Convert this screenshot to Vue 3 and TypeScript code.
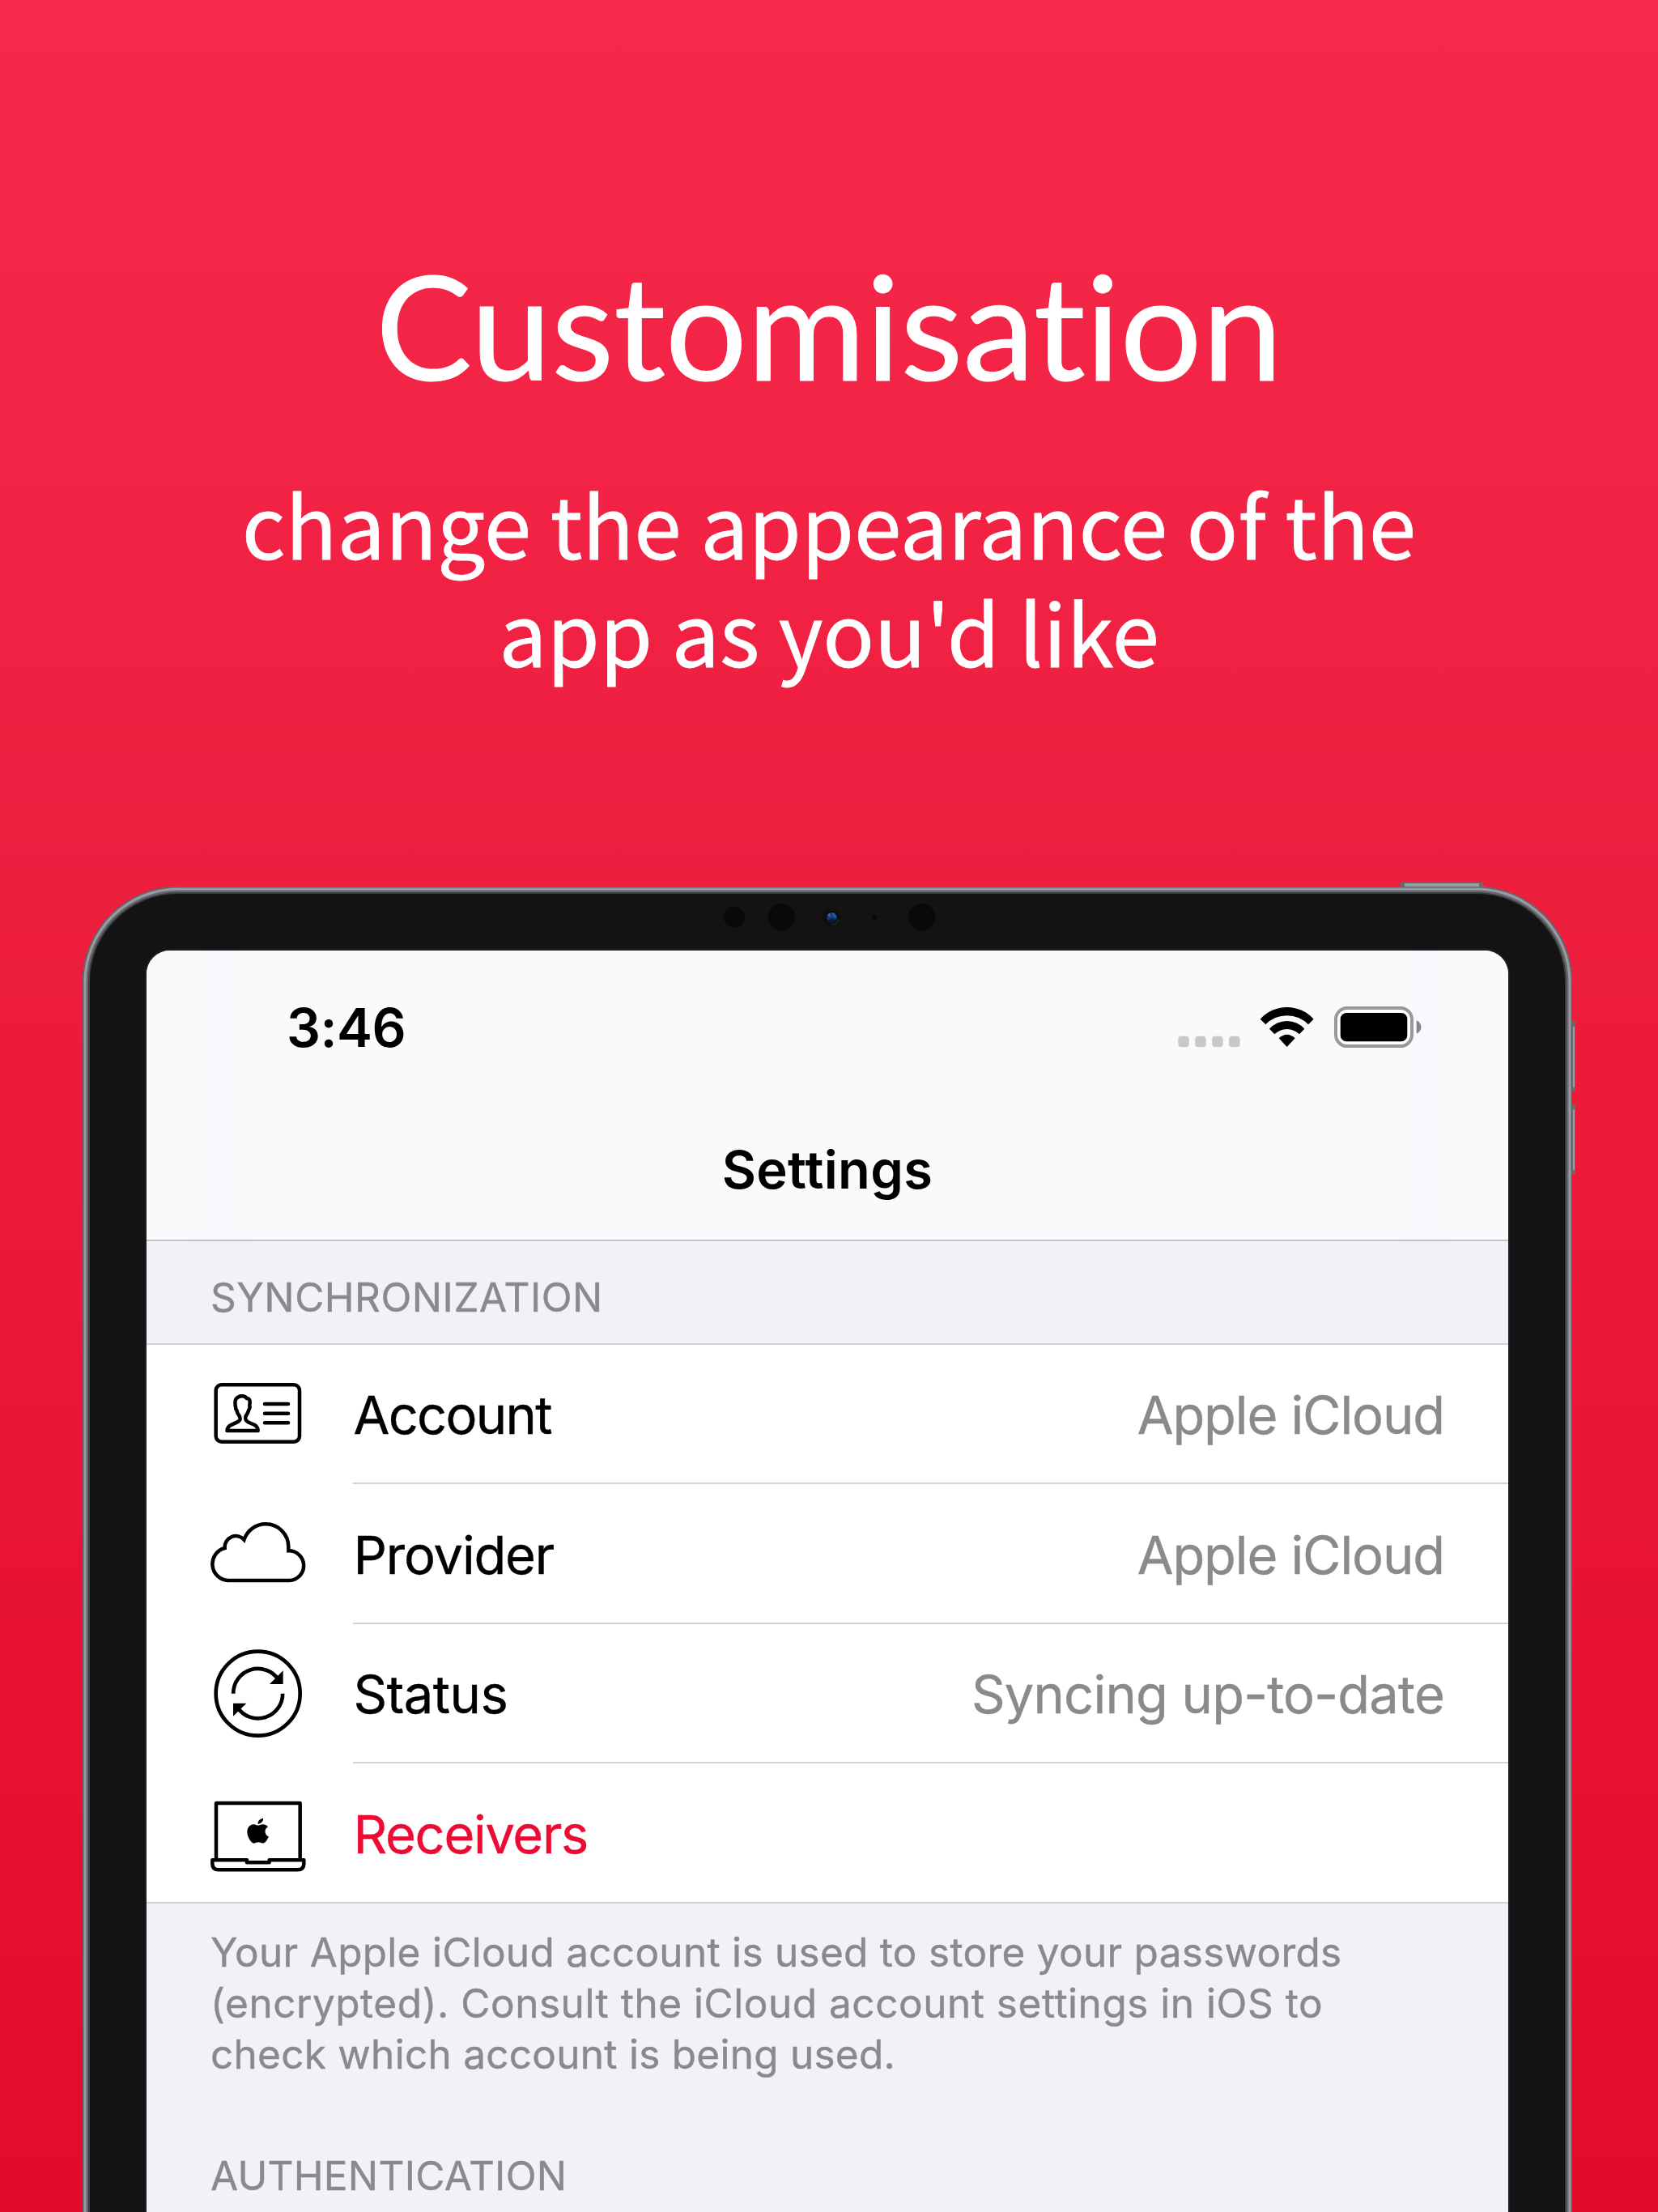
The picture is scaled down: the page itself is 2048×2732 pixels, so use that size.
<script setup lang="ts">
type IconName = 'card' | 'cloud' | 'sync' | 'laptop'

interface SettingRow {
  icon: IconName
  viewBox: string
  label: string
  tracking: number
  value?: string
  valueTracking?: number
  accent?: boolean
}

interface TrackedLine {
  text: string
  tracking: number
}

const rows: SettingRow[] = [
  { icon: 'card', viewBox: '60 -63 354 519', label: 'Account', tracking: -1.7, value: 'Apple iCloud', valueTracking: -1.1 },
  { icon: 'cloud', viewBox: '60 453 354 519', label: 'Provider', tracking: -1.18, value: 'Apple iCloud', valueTracking: -1.1 },
  { icon: 'sync', viewBox: '60 -18 354 519', label: 'Status', tracking: -0.5, value: 'Syncing up-to-date', valueTracking: -0.8 },
  { icon: 'laptop', viewBox: '60 498 354 519', label: 'Receivers', tracking: -1.33, accent: true },
]

const note: TrackedLine[] = [
  { text: 'Your Apple iCloud account is used to store your passwords', tracking: 0.28 },
  { text: '(encrypted). Consult the iCloud account settings in iOS to', tracking: 0.52 },
  { text: 'check which account is being used.', tracking: 0.26 },
]

const spacing = (px = 0) => ({ letterSpacing: `${px}px` })
</script>

<template>
  <main class="poster">
    <header class="hero">
      <h1>Customisation</h1>
      <p>change the appearance of the<br />app as you'd like</p>
    </header>

    <section class="device">
      <i class="power"></i>
      <i class="volume up"></i>
      <i class="volume down"></i>
      <svg class="sensors" viewBox="0 0 340 60" aria-hidden="true">
        <g fill="#090909">
          <circle cx="47" cy="32.7" r="13" />
          <circle cx="105.3" cy="32.7" r="16.5" />
          <circle cx="220.3" cy="32.7" r="3.4" />
          <circle cx="278.7" cy="32.7" r="16.5" />
        </g>
        <circle cx="167" cy="32.7" r="11" fill="#0f0f0f" />
        <path d="M176 35a9.5 9.5 0 0 1-9 7" fill="none" stroke="#242424" stroke-width="2" />
        <circle cx="167.3" cy="33.2" r="7.5" fill="#050708" />
        <circle cx="167.3" cy="33.4" r="6.3" fill="#15366a" />
        <path d="M162 30.2a6.3 6.3 0 0 1 3.5-2.8l1 6z" fill="#2a66a6" />
        <path d="M167.5 27.1a6.3 6.3 0 0 1 6.1 6.3l-5-1z" fill="#245a9a" />
        <path d="M162 36.5a6.3 6.3 0 0 0 10.5 0l-4-2z" fill="#0b1730" />
      </svg>

      <div class="screen">
        <div class="status">
          <span class="time">3:46</span>
          <svg class="indicators" viewBox="0 -11 300 60" aria-hidden="true">
            <g fill="#c8c8ca">
              <rect x="5.3" y="29.7" width="13.5" height="13.5" rx="4" />
              <rect x="26.2" y="29.7" width="13.5" height="13.5" rx="4" />
              <rect x="47.2" y="29.7" width="13.5" height="13.5" rx="4" />
              <rect x="68.1" y="29.7" width="13.5" height="13.5" rx="4" />
            </g>
            <g transform="translate(-30 -40) scale(.33333)">
              <path d="M410 146A133 133 0 0 1 608 146L588 166A110 110 0 0 0 430 166Z" />
              <path d="M444 182A87 87 0 0 1 574 182L555 202A66 66 0 0 0 463 202Z" />
              <path d="M479 217Q509 190 539 217L509 249Z" />
            </g>
            <rect x="200" y="-4.9" width="94" height="47" rx="14" fill="#fff" stroke="#98989a" stroke-width="4" />
            <rect x="205.7" y="1.1" width="82.6" height="35.2" rx="7.5" />
            <path d="M299.7 10.3q5.7 2.7 5.7 8.2t-5.7 8.2z" fill="#858587" />
          </svg>
        </div>
        <div class="nav">Settings</div>

        <h2 class="group first">SYNCHRONIZATION</h2>
        <div class="list">
          <div v-for="row in rows" :key="row.label" class="row">
            <svg class="icon" :viewBox="row.viewBox" aria-hidden="true">
              <g v-if="row.icon === 'card'" fill="none" stroke="#000" stroke-width="13.5" stroke-linejoin="round" stroke-linecap="round">
                <rect x="80" y="91" width="310" height="211" rx="21" />
                <path d="M121.5 261C121.5 250 128 243 140 238C156 231 170 226 170 217C170 207 166 205 162 199C157 191 160 188 156 184C151 178 155 175 152 169C151 158 150 149 155 143C165 130 187 130 194 141C203 140 207 148 206 158C206 163 203 168 206 172C206 179 204 182 201 186C199 195 196 199 192 205C188 211 189 220 194 225C203 234 219 235 228 243C234 249 236 254 236 261Z" />
                <path d="M261 162H348M261 197H348M261 232H348" />
              </g>
              <path
                v-else-if="row.icon === 'cloud'"
                d="M349 706A55 55 0 0 1 352 816H125A61 61 0 0 1 113 696A41 41 0 0 1 184.5 665A84 84 0 0 1 265 607A84 84 0 0 1 349 691Z"
                fill="none"
                stroke="#000"
                stroke-width="13.5"
              />
              <g v-else-if="row.icon === 'sync'">
                <g fill="none" stroke="#000" stroke-width="14">
                  <circle cx="236" cy="245" r="156" />
                  <path d="M144.5 245A91.5 91.5 0 0 1 312 193.5M327.5 245A91.5 91.5 0 0 1 160 296.5" />
                </g>
                <path d="M329 160V210H279ZM144 281H193L144 329Z" />
              </g>
              <g v-else>
                <g fill="none" stroke="#000" stroke-width="13.5" stroke-linejoin="round">
                  <path d="M81 860V651H392V860" />
                  <path d="M67 862H195V871H278V862H406V875Q406 898 383 898H90Q67 898 67 875Z" />
                </g>
                <path
                  transform="translate(187 707) scale(4.07 3.87)"
                  d="M12.152 6.896c-.948 0-2.415-1.078-3.96-1.04-2.04.027-3.91 1.183-4.961 3.014-2.117 3.675-.546 9.103 1.519 12.09 1.013 1.454 2.208 3.09 3.792 3.039 1.52-.065 2.09-.987 3.935-.987 1.831 0 2.35.987 3.96.948 1.637-.026 2.676-1.48 3.676-2.948 1.156-1.688 1.636-3.325 1.662-3.415-.039-.013-3.182-1.221-3.22-4.857-.026-3.04 2.48-4.494 2.597-4.559-1.429-2.09-3.623-2.324-4.39-2.376-2-.156-3.675 1.09-4.61 1.09zM15.53 3.83c.843-1.012 1.4-2.427 1.245-3.83-1.207.052-2.662.805-3.532 1.818-.78.896-1.454 2.338-1.273 3.714 1.338.104 2.715-.688 3.559-1.701"
                />
              </g>
            </svg>
            <div class="body">
              <span class="label" :class="{ accent: row.accent }" :style="spacing(row.tracking)">{{ row.label }}</span>
              <span v-if="row.value" class="value" :style="spacing(row.valueTracking)">{{ row.value }}</span>
            </div>
          </div>
        </div>

        <div class="note">
          <div v-for="line in note" :key="line.text" :style="spacing(line.tracking)">{{ line.text }}</div>
        </div>
        <h2 class="group second">AUTHENTICATION</h2>
      </div>
    </section>
  </main>
</template>

<style>
html,
body {
  margin: 0;
  background: #e30a2b;
}
</style>

<style scoped>
.poster {
  box-sizing: border-box;
  width: 2048px;
  height: 2732px;
  overflow: hidden;
  background: linear-gradient(#f7294b, #ed1d3e 42%, #e30a2b);
  font-family: Inter, "Liberation Sans", sans-serif;
}

.hero {
  box-sizing: border-box;
  height: 1095px;
  padding-top: 301px;
  color: #fff;
  text-align: center;
}

h1 {
  margin: 0;
  font-family: Lato, sans-serif;
  font-size: 178.3px;
  line-height: 200px;
  font-weight: 400;
  font-variant-ligatures: none;
  -webkit-text-stroke: 1px #fff;
}

.hero p {
  margin: 78px 0 0;
  font-family: "Noto Sans CJK SC", "Noto Sans", sans-serif;
  font-size: 105.3px;
  line-height: 132.7px;
  -webkit-text-stroke: 0.8px #fff;
}

.device {
  position: relative;
  box-sizing: border-box;
  width: 1840px;
  height: 1800px;
  margin-left: 102px;
  padding: 79px 79px 0;
  border-radius: 118px;
  background: #131313;
  box-shadow:
    inset 0 0 0 1.5px #5f6669,
    inset 0 0 0 4.5px #999aa2,
    inset 0 0 0 7px #65676c,
    inset 0 0 0 9px #3a3c3f;
}

.power,
.volume {
  position: absolute;
  box-sizing: border-box;
  background: #999ca1;
  border: 1px solid #676b6f;
}

.power {
  left: 1628px;
  top: -5px;
  width: 102px;
  height: 5px;
  border-width: 1px 5px 0;
}

.volume {
  left: 1840px;
  width: 4px;
  height: 86px;
  border-width: 6px 1px 5px 1px;
}

.up {
  top: 167px;
}

.down {
  top: 269px;
}

.sensors {
  position: absolute;
  left: 758px;
  top: 5px;
  width: 340px;
  height: 60px;
}

.screen {
  width: 1682px;
  height: 1721px;
  border-radius: 29px 29px 0 0;
  overflow: hidden;
  background: #f2f1f7;
  box-shadow: 0 0 0 2px #1a2021;
}

.status,
.nav {
  box-sizing: border-box;
  display: flex;
  align-items: center;
  background: linear-gradient(90deg, #fafafc 50px, #f9f8fd 90px, #fafafc 135px, #fafafc 1550px, #f9f8fd 1578px, #fafafc 1610px);
}

.status {
  height: 190px;
  justify-content: space-between;
  padding: 0 108px 0 173px;
}

.time {
  font-size: 66px;
  font-weight: 600;
  letter-spacing: -0.46px;
}

.indicators {
  width: 300px;
  height: 60px;
  overflow: visible;
  margin-right: 5px;
}

.nav {
  height: 169px;
  justify-content: center;
  padding-bottom: 7px;
  border-bottom: 2px solid #c4c4c8;
  font-size: 65px;
  font-weight: 600;
  letter-spacing: 0.36px;
}

.group {
  box-sizing: border-box;
  height: 126px;
  margin: 0;
  padding: 12px 79px 0;
  color: #8a8a8e;
  font-size: 49.5px;
  line-height: 114px;
  font-weight: 400;
  -webkit-text-stroke: 0.4px #8a8a8e;
}

.first {
  letter-spacing: 0.5px;
}

.second {
  letter-spacing: 0.27px;
}

.list {
  background: #fff;
  box-shadow: inset 0 2px 0 #d0cfd3;
}

.row {
  display: flex;
  height: 172px;
  padding-left: 79px;
}

.row:nth-child(even) {
  height: 173px;
}

.icon {
  flex: none;
  width: 118px;
  height: 173px;
}

.body {
  box-sizing: border-box;
  display: flex;
  flex: 1;
  align-items: center;
  justify-content: space-between;
  margin-left: 58px;
  padding: 5px 79px 0 0.5px;
  font-size: 65px;
  -webkit-text-stroke-width: 0.4px;
}

.row + .row .body {
  box-shadow: inset 0 2px 0 #d3d3d5;
}

.label {
  color: #000;
}

.accent {
  color: #eb0c33;
}

.value {
  color: #8a8a8e;
}

.note {
  box-sizing: border-box;
  height: 268.7px;
  padding: 31px 0 0 79px;
  box-shadow: inset 0 2px 0 #cfcfd2;
  color: #8a8a8e;
  font-size: 49.5px;
  line-height: 63px;
  white-space: nowrap;
  -webkit-text-stroke: 0.4px #8a8a8e;
}
</style>
